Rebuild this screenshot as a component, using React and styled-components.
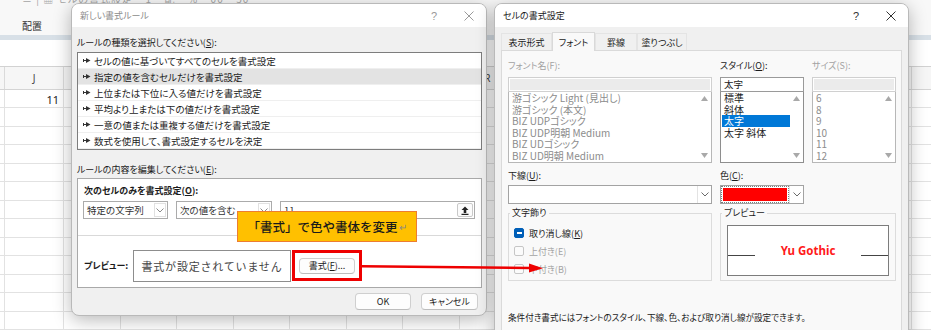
import React from 'react'
import styled, { createGlobalStyle } from 'styled-components'

const GlobalStyle = createGlobalStyle`
  body {
    margin: 0;
    font-family: "Noto Sans CJK JP", "Noto Sans", sans-serif;
  }
`

const JP = '"Noto Sans CJK JP", "Noto Sans", sans-serif'

const Desktop = styled.div`
  position: relative;
  width: 931px;
  height: 330px;
  overflow: hidden;
  background: #fff;
  font-family: ${JP};
  font-feature-settings: "palt";
  color: #1b1b1b;
`

/* ---------- excel sheet behind the dialogs ---------- */

const Sheet = styled.div`
  display: flex;
  flex-direction: column;
  height: 100%;
`

const Ribbon = styled.div`
  height: 37px;
  background: #f8f8f8;
  display: flex;
  flex-direction: column;
  justify-content: space-between;
  padding-left: 22px;
  box-sizing: border-box;
  overflow: hidden;
`

const RibbonCut = styled.div`
  margin-top: -8px;
  font-size: 10px;
  line-height: 14px;
  color: #a5a5a5;
  letter-spacing: 1px;
`

const RibbonGroupName = styled.div`
  font-size: 10px;
  line-height: 16px;
  padding-bottom: 1px;
  color: #333;
`

const RibbonEdge = styled.div`
  height: 5px;
  background: #d8e0e7;
`

const FormulaArea = styled.div`
  height: 27px;
  background: #fff;
  border-bottom: 1px solid #d2d2d2;
`

const cols = '5px 59px repeat(16, 56.5px)'

const HeaderRow = styled.div`
  display: grid;
  grid-template-columns: ${cols};
  height: 24px;
  box-sizing: border-box;
  background: #f6f6f6;
  border-bottom: 1px solid #d4d4d4;
`

const HeaderCell = styled.div`
  border-right: 1px solid #dadada;
  display: flex;
  align-items: center;
  justify-content: center;
  font-family: "Noto Sans", sans-serif;
  font-size: 10px;
  color: #444;
`

const GridRow = styled.div`
  display: grid;
  grid-template-columns: ${cols};
  height: 19.4px;
  box-sizing: border-box;
  border-bottom: 1px solid #e2e2e2;
`

const Cell = styled.div`
  border-right: 1px solid #e2e2e2;
  display: flex;
  align-items: center;
  justify-content: flex-end;
  padding: 2px 4px 0 0;
  font-family: "Noto Sans", sans-serif;
  font-size: 11px;
  color: #222;
`

/* ---------- window chrome ---------- */

const Window = styled.div`
  position: absolute;
  left: ${p => p.$x}px;
  top: ${p => p.$y}px;
  width: ${p => p.$w}px;
  height: ${p => p.$h}px;
  box-sizing: border-box;
  background: #f0f0f0;
  border: 1px solid #b9b9b9;
  border-radius: 8px;
  box-shadow: 0 4px 18px rgba(0, 0, 0, 0.28);
  display: flex;
  flex-direction: column;
  overflow: hidden;
`

const TitleBar = styled.div`
  height: 23px;
  flex: none;
  background: #fff;
  display: flex;
  align-items: center;
  padding-left: 8px;
  font-size: 9px;
  color: ${p => (p.$active ? '#1a1a1a' : '#8c8c8c')};
`

const TitleText = styled.div`
  flex: 1;
`

const TitleButton = styled.div`
  width: ${p => p.$w}px;
  height: 23px;
  display: flex;
  align-items: center;
  justify-content: center;
  font-family: "Liberation Sans", sans-serif;
  font-size: 11px;
  color: ${p => (p.$active ? '#333' : '#999')};
`

const Label = styled.div`
  font-size: 9px;
  line-height: 16px;
  white-space: nowrap;
  font-weight: ${p => (p.$bold ? 700 : 400)};
  color: ${p => (p.$disabled ? '#a2a2a2' : '#1b1b1b')};
  u {
    text-underline-offset: 1px;
  }
`

const Button = styled.div`
  width: ${p => p.$w}px;
  height: ${p => p.$h || 17}px;
  box-sizing: border-box;
  background: #fdfdfd;
  border: 1px solid #cfcfcf;
  border-bottom-color: #bdbdbd;
  border-radius: 4px;
  display: flex;
  align-items: center;
  justify-content: center;
  font-size: 9px;
  color: #1b1b1b;
  u {
    text-underline-offset: 1px;
  }
`

/* ---------- dialog 1: new formatting rule ---------- */

const RuleBody = styled.div`
  flex: 1;
  display: flex;
  flex-direction: column;
  padding: 8px 4px 0 5px;
`

const RuleList = styled.div`
  margin-top: 1px;
  height: 98px;
  box-sizing: border-box;
  border: 1px solid #7d7d7d;
  background: #fff;
`

const RuleItem = styled.div`
  height: 16px;
  box-sizing: border-box;
  display: flex;
  align-items: center;
  gap: 3px;
  padding-left: 5px;
  font-size: 9.5px;
  line-height: 14px;
  color: #1b1b1b;
  background: ${p => (p.$selected ? '#e3e3e3' : 'transparent')};
  border-bottom: 1px solid #efefef;
`

const SectionLabel = styled(Label)`
  margin-top: 12px;
`

const EditGroup = styled.div`
  height: 110px;
  box-sizing: border-box;
  border: 1px solid #a9a9a9;
  background: #fff;
  display: flex;
  flex-direction: column;
`

const EditTop = styled.div`
  height: 56px;
  box-sizing: border-box;
  padding: 4px 6px 0 5px;
  display: flex;
  flex-direction: column;
`

const ConditionRow = styled.div`
  margin-top: 2px;
  display: flex;
  gap: 8px;
`

const Combo = styled.div`
  width: ${p => (p.$w ? `${p.$w}px` : 'auto')};
  flex: ${p => (p.$w ? 'none' : 1)};
  height: 18px;
  box-sizing: border-box;
  border: 1px solid #ababab;
  background: #fff;
  display: flex;
  align-items: center;
  padding: 0 1px 0 3px;
  font-size: 9.5px;
  color: #333;
`

const ComboText = styled.div`
  flex: 1;
  white-space: nowrap;
`

const ComboButton = styled.div`
  width: 12px;
  height: 14px;
  box-sizing: border-box;
  border: 1px solid #e1e1e1;
  display: flex;
  align-items: center;
  justify-content: center;
`

const RefButton = styled.div`
  width: 16px;
  height: 14px;
  box-sizing: border-box;
  border: 1px solid #c9c9c9;
  border-radius: 2px;
  background: #fbfbfb;
  display: flex;
  align-items: center;
  justify-content: center;
`

const EditBottom = styled.div`
  flex: 1;
  border-top: 1px solid #d9d9d9;
  padding: 14px 0 0 6px;
  display: flex;
  align-items: flex-start;
`

const PreviewCaption = styled(Label)`
  width: 49px;
  line-height: 32px;
`

const PreviewBox = styled.div`
  width: 158px;
  height: 32px;
  box-sizing: border-box;
  border: 1px solid #8d8d8d;
  display: flex;
  align-items: center;
  justify-content: center;
  font-feature-settings: normal;
  font-size: 11px;
  letter-spacing: 0.8px;
  color: #444;
`

const Highlight = styled.div`
  margin-left: 1px;
  width: 70px;
  height: 31px;
  box-sizing: border-box;
  border: 3px solid #ee0000;
  display: flex;
  align-items: center;
  justify-content: center;
`

const ButtonRow = styled.div`
  margin-top: 5px;
  display: flex;
  justify-content: flex-end;
  gap: 10px;
  padding-right: 4px;
`

/* ---------- dialog 2: format cells ---------- */

const FormatBody = styled.div`
  flex: 1;
  display: flex;
  flex-direction: column;
  padding: 5px 6px 0 6px;
`

const Tabs = styled.div`
  height: 18px;
  display: flex;
  align-items: flex-end;
`

const Tab = styled.div`
  position: relative;
  z-index: 1;
  width: ${p => p.$w}px;
  height: ${p => (p.$active ? 19 : 17)}px;
  margin-bottom: ${p => (p.$active ? -1 : 0)}px;
  box-sizing: border-box;
  border: 1px solid ${p => (p.$active ? '#d9d9d9' : '#e4e4e4')};
  border-bottom: none;
  background: ${p => (p.$active ? '#f9f9f9' : '#f0f0f0')};
  display: flex;
  align-items: center;
  justify-content: center;
  font-size: 9px;
  color: #1b1b1b;
`

const Panel = styled.div`
  flex: 1;
  box-sizing: border-box;
  border: 1px solid #dadada;
  background: #f9f9f9;
  padding: 7px 5px 0 6px;
  display: grid;
  grid-template-columns: 204px 84px 84px;
  grid-auto-rows: min-content;
  column-gap: 8px;
`

const FieldInput = styled.div`
  margin-top: 3px;
  height: 15px;
  box-sizing: border-box;
  border: 1px solid ${p => (p.$disabled ? '#d0d0d0' : '#9a9a9a')};
  box-shadow: ${p => (p.$disabled ? 'inset 0 0 0 1px #fff' : 'none')};
  background: ${p => (p.$disabled ? '#ebebeb' : '#fff')};
  padding-left: 3px;
  font-size: 9.5px;
  line-height: 13px;
  overflow: hidden;
`

const ListBox = styled.div`
  height: 71px;
  box-sizing: border-box;
  border: 1px solid ${p => (p.$disabled ? '#b7b7b7' : '#8e8e8e')};
  border-top: none;
  background: #fff;
  display: flex;
`

const ListItems = styled.div`
  flex: 1;
  padding-left: 1px;
  overflow: hidden;
`

const ListItem = styled.div`
  height: 11.6px;
  line-height: 11.6px;
  padding-left: 2px;
  font-size: 10px;
  white-space: nowrap;
  color: ${p => (p.$selected ? '#fff' : p.$disabled ? '#8c8c8c' : '#1b1b1b')};
  background: ${p => (p.$selected ? '#0078d7' : 'transparent')};
`

const ScrollBar = styled.div`
  width: 13px;
  display: flex;
  flex-direction: column;
  justify-content: space-between;
  align-items: center;
  padding: 4px 0 4px;
`

const SecondLabel = styled(Label)`
  margin-top: 5px;
  grid-column: ${p => p.$col};
`

const DropDown = styled.div`
  grid-column: ${p => p.$col};
  margin-top: 1px;
  height: 19px;
  box-sizing: border-box;
  border: 1px solid #a3a3a3;
  background: #fff;
  display: flex;
  align-items: stretch;
`

const DropValue = styled.div`
  flex: 1;
  padding: 2px;
  display: flex;
`

const Swatch = styled.div`
  flex: 1;
  background: #ff0000;
  outline: 1px dotted #7a7a7a;
  outline-offset: 1px;
`

const DropArrow = styled.div`
  width: 13px;
  border-left: 1px solid #e3e3e3;
  display: flex;
  align-items: center;
  justify-content: center;
`

const GroupBox = styled.fieldset`
  grid-column: ${p => p.$col};
  margin: 1px 0 0;
  padding: 4px 6px 3px ${p => p.$pl}px;
  border: 1px solid #dcdcdc;
  min-width: 0;
  display: flex;
  flex-direction: column;
  gap: 2px;
`

const Legend = styled.legend`
  margin-left: ${p => p.$ml}px;
  padding: 0 2px;
  font-size: 9px;
  line-height: 16px;
  color: #1b1b1b;
`

const CheckRow = styled.div`
  height: 16px;
  display: flex;
  align-items: center;
  gap: 5px;
  font-size: 9px;
  color: ${p => (p.$checked ? '#1b1b1b' : '#a4a4a4')};
  u {
    text-underline-offset: 1px;
  }
`

const CheckBox = styled.div`
  width: 10px;
  height: 10px;
  box-sizing: border-box;
  border-radius: 2px;
  border: 1px solid ${p => (p.$checked ? '#005fb8' : '#c6c6c6')};
  background: ${p => (p.$checked ? '#005fb8' : '#fbfbfb')};
  display: flex;
  align-items: center;
  justify-content: center;
  &::after {
    content: '';
    display: ${p => (p.$checked ? 'block' : 'none')};
    width: 5px;
    height: 1.5px;
    background: #fff;
  }
`

const SampleBox = styled.div`
  height: 51px;
  box-sizing: border-box;
  border: 1px solid #7c7c7c;
  background: #fff;
  display: flex;
  align-items: center;
`

const BaseLine = styled.div`
  width: 27px;
  height: 1px;
  margin-top: 9px;
  background: #444;
`

const SampleText = styled.div`
  flex: 1;
  text-align: center;
  font-family: "Noto Sans", sans-serif;
  font-weight: 700;
  font-size: 11.5px;
  color: #ff1a1a;
`

const Note = styled.div`
  grid-column: 1 / 4;
  margin-top: 28px;
  font-size: 8.6px;
  line-height: 16px;
  white-space: nowrap;
  color: #1b1b1b;
`

/* ---------- annotations ---------- */

const Callout = styled.div`
  position: absolute;
  left: 237px;
  top: 211px;
  width: 180px;
  height: 31px;
  box-sizing: border-box;
  background: #ffc000;
  border: 1px solid #ed7d31;
  display: flex;
  align-items: center;
  justify-content: center;
  font-feature-settings: normal;
  font-size: 12.5px;
  font-weight: 500;
  color: #1a1a1a;
`

const ReturnMark = styled.span`
  font-size: 10px;
  color: #8a8a8a;
  margin-left: 1px;
`

const ArrowLayer = styled.svg`
  position: absolute;
  left: 0;
  top: 0;
  pointer-events: none;
`

/* ---------- icons ---------- */

const RuleArrow = () => (
  <svg width="8" height="7" viewBox="0 0 8 7">
    <path d="M0.5 2v3M0.5 3.5h3" stroke="#333" strokeWidth="1" fill="none" />
    <path d="M3 1l4.5 2.5L3 6z" fill="#333" />
  </svg>
)

const Chevron = ({ color = '#6a6a6a' }) => (
  <svg width="8" height="5" viewBox="0 0 8 5">
    <path d="M0.5 0.5L4 4l3.5-3.5" stroke={color} strokeWidth="1" fill="none" />
  </svg>
)

const Tri = ({ down }) => (
  <svg width="7" height="5" viewBox="0 0 7 5">
    <path d={down ? 'M0 0h7L3.5 5z' : 'M3.5 0L7 5H0z'} fill="#a9a9a9" />
  </svg>
)

const CloseIcon = ({ color }) => (
  <svg width="10" height="10" viewBox="0 0 10 10">
    <path d="M0.5 0.5l9 9M9.5 0.5l-9 9" stroke={color} strokeWidth="1" />
  </svg>
)

const RefIcon = () => (
  <svg width="8" height="9" viewBox="0 0 8 9">
    <path d="M4 0.5L7.5 4H5.3v3H2.7V4H0.5z" fill="#222" />
    <path d="M0.5 8.3h7" stroke="#222" strokeWidth="1.2" />
  </svg>
)

const ruleTypes = [
  'セルの値に基づいてすべてのセルを書式設定',
  '指定の値を含むセルだけを書式設定',
  '上位または下位に入る値だけを書式設定',
  '平均より上または下の値だけを書式設定',
  '一意の値または重複する値だけを書式設定',
  '数式を使用して、書式設定するセルを決定',
]

const fontNames = [
  '游ゴシック Light (見出し)',
  '游ゴシック (本文)',
  'BIZ UDPゴシック',
  'BIZ UDP明朝 Medium',
  'BIZ UDゴシック',
  'BIZ UD明朝 Medium',
]

const styles = ['標準', '斜体', '太字', '太字 斜体']
const sizes = ['6', '8', '9', '10', '11', '12']
// only J and R show between the dialogs; the last column runs off the page
const letters = ['', 'J', 'K', 'L', 'M', 'N', 'O', 'P', 'Q', 'R', 'S', 'T', 'U', 'V', 'W', 'X', 'Y', '']

function Titles({ title, active }) {
  const c = active ? '#333' : '#9a9a9a'
  return (
    <TitleBar $active={active}>
      <TitleText>{title}</TitleText>
      <TitleButton $w={36} $active={active}>?</TitleButton>
      <TitleButton $w={34} $active={active}>
        <CloseIcon color={c} />
      </TitleButton>
    </TitleBar>
  )
}

function List({ items, selected, disabled }) {
  return (
    <ListBox $disabled={disabled}>
      <ListItems>
        {items.map(t => (
          <ListItem key={t} $selected={t === selected} $disabled={disabled}>
            {t}
          </ListItem>
        ))}
      </ListItems>
      <ScrollBar>
        <Tri />
        <Tri down />
      </ScrollBar>
    </ListBox>
  )
}

export default function App() {
  return (
    <>
      <GlobalStyle />
      <Desktop>
        <Sheet>
          <Ribbon>
            <RibbonCut>≡ | ▦ セルの書式設定 ・ 1 ・ 配 ・ % ・ 00 ・ 50</RibbonCut>
            <RibbonGroupName>配置</RibbonGroupName>
          </Ribbon>
          <RibbonEdge />
          <FormulaArea />
          <HeaderRow>
            {letters.map((l, i) => (
              <HeaderCell key={i}>{l}</HeaderCell>
            ))}
          </HeaderRow>
          {Array.from({ length: 13 }).map((_, r) => (
            <GridRow key={r}>
              {letters.map((l, i) => (
                <Cell key={i}>{r === 0 && l === 'J' ? '11' : ''}</Cell>
              ))}
            </GridRow>
          ))}
        </Sheet>

        <Window $x={71} $y={3} $w={416} $h={313}>
          <Titles title="新しい書式ルール" />
          <RuleBody>
            <Label>
              ルールの種類を選択してください(<u>S</u>):
            </Label>
            <RuleList>
              {ruleTypes.map((t, i) => (
                <RuleItem key={t} $selected={i === 1}>
                  <RuleArrow />
                  {t}
                </RuleItem>
              ))}
            </RuleList>
            <SectionLabel>
              ルールの内容を編集してください(<u>E</u>):
            </SectionLabel>
            <EditGroup>
              <EditTop>
                <Label $bold style={{ paddingLeft: 1 }}>
                  次のセルのみを書式設定(<u>O</u>):
                </Label>
                <ConditionRow>
                  <Combo $w={85}>
                    <ComboText>特定の文字列</ComboText>
                    <ComboButton>
                      <Chevron color="#8a8a8a" />
                    </ComboButton>
                  </Combo>
                  <Combo $w={96}>
                    <ComboText>次の値を含む</ComboText>
                    <ComboButton>
                      <Chevron color="#8a8a8a" />
                    </ComboButton>
                  </Combo>
                  <Combo>
                    <ComboText>11</ComboText>
                    <RefButton>
                      <RefIcon />
                    </RefButton>
                  </Combo>
                </ConditionRow>
              </EditTop>
              <EditBottom>
                <PreviewCaption $bold>プレビュー:</PreviewCaption>
                <PreviewBox>書式が設定されていません</PreviewBox>
                <Highlight>
                  <Button $w={56} $h={16}>
                    書式(<u>F</u>)...
                  </Button>
                </Highlight>
              </EditBottom>
            </EditGroup>
            <ButtonRow>
              <Button $w={56}>OK</Button>
              <Button $w={57}>キャンセル</Button>
            </ButtonRow>
          </RuleBody>
        </Window>

        <Window $x={494} $y={3} $w={415} $h={360}>
          <Titles title="セルの書式設定" active />
          <FormatBody>
            <Tabs>
              <Tab $w={51}>表示形式</Tab>
              <Tab $w={43} $active>
                フォント
              </Tab>
              <Tab $w={42}>罫線</Tab>
              <Tab $w={50}>塗りつぶし</Tab>
            </Tabs>
            <Panel>
              <Label $disabled>フォント名(F):</Label>
              <Label>
                スタイル(<u>O</u>):
              </Label>
              <Label $disabled>サイズ(S):</Label>

              <FieldInput $disabled />
              <FieldInput>太字</FieldInput>
              <FieldInput $disabled />

              <List items={fontNames} disabled />
              <List items={styles} selected="太字" />
              <List items={sizes} disabled />

              <SecondLabel $col="1">
                下線(<u>U</u>):
              </SecondLabel>
              <SecondLabel $col="2 / 4">
                色(<u>C</u>):
              </SecondLabel>

              <DropDown $col="1">
                <DropValue />
                <DropArrow>
                  <Chevron />
                </DropArrow>
              </DropDown>
              <DropDown $col="2">
                <DropValue>
                  <Swatch />
                </DropValue>
                <DropArrow>
                  <Chevron />
                </DropArrow>
              </DropDown>

              <GroupBox $col="1" $pl={5}>
                <Legend $ml={-4}>文字飾り</Legend>
                <CheckRow $checked>
                  <CheckBox $checked />
                  <span>
                    取り消し線(<u>K</u>)
                  </span>
                </CheckRow>
                <CheckRow>
                  <CheckBox />
                  <span>上付き(E)</span>
                </CheckRow>
                <CheckRow>
                  <CheckBox />
                  <span>下付き(B)</span>
                </CheckRow>
              </GroupBox>
              <GroupBox $col="2 / 4" $pl={6}>
                <Legend $ml={-5}>プレビュー</Legend>
                <SampleBox>
                  <BaseLine />
                  <SampleText>Yu Gothic</SampleText>
                  <BaseLine />
                </SampleBox>
              </GroupBox>

              <Note>条件付き書式にはフォントのスタイル、下線、色、および取り消し線が設定できます。</Note>
            </Panel>
          </FormatBody>
        </Window>

        <Callout>
          「書式」で色や書体を変更<ReturnMark>↵</ReturnMark>
        </Callout>

        <ArrowLayer width="931" height="330">
          <path d="M362 266.2L531 268" stroke="#ee0000" strokeWidth="2.5" fill="none" />
          <path d="M529 263.6L543 268.2L529 272.6z" fill="#ee0000" />
        </ArrowLayer>
      </Desktop>
    </>
  )
}
